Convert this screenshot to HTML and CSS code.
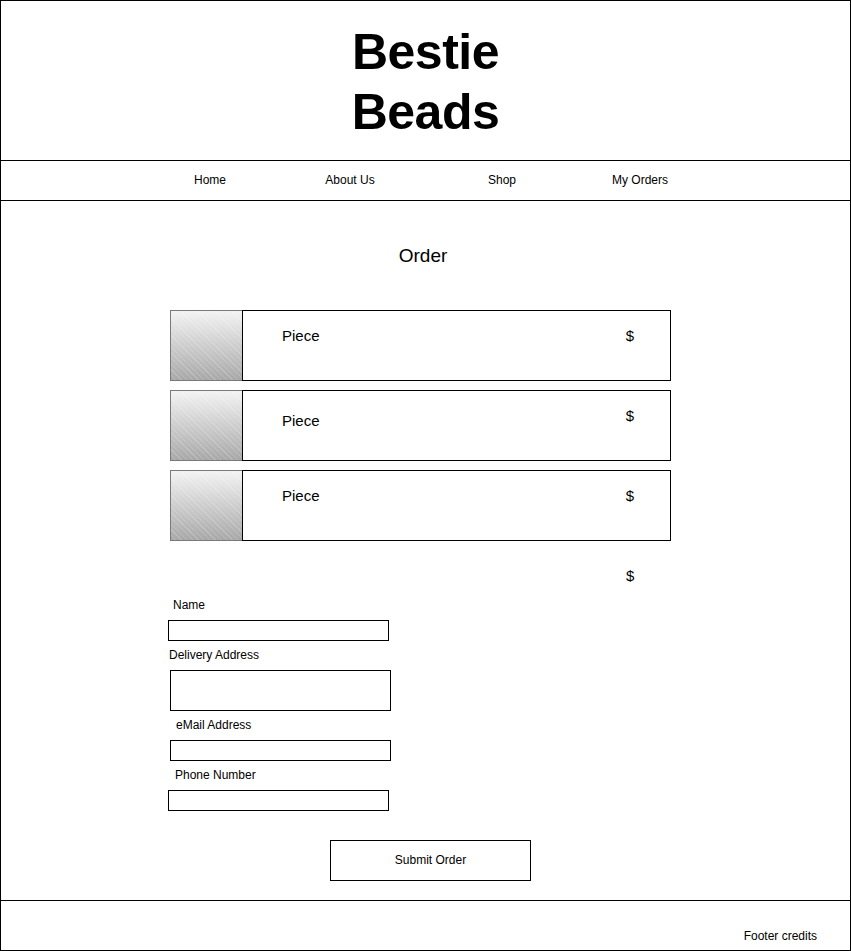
FILE: index.html
```html
<!DOCTYPE html>
<html>
<head>
<meta charset="utf-8">
<title>Bestie Beads</title>
<link rel="stylesheet" href="styles.css">
</head>
<body>
<div class="page">
  <header class="header">
    <h1 class="title">Bestie<br>Beads</h1>
  </header>
  <nav class="nav">
    <a class="nav-item nav-home">Home</a>
    <a class="nav-item nav-about">About Us</a>
    <a class="nav-item nav-shop">Shop</a>
    <a class="nav-item nav-orders">My Orders</a>
  </nav>
  <main class="main">
    <h2 class="order-title">Order</h2>
    <div class="cards">
      <div class="card">
        <div class="thumb"></div>
        <div class="card-body">
          <span class="piece">Piece</span>
          <span class="price">$</span>
        </div>
      </div>
      <div class="card">
        <div class="thumb"></div>
        <div class="card-body">
          <span class="piece piece-low">Piece</span>
          <span class="price">$</span>
        </div>
      </div>
      <div class="card">
        <div class="thumb"></div>
        <div class="card-body">
          <span class="piece">Piece</span>
          <span class="price">$</span>
        </div>
      </div>
    </div>
    <div class="total">$</div>
    <form class="form">
      <label class="label label-name">Name</label>
      <div class="field field-name"></div>
      <label class="label label-address">Delivery Address</label>
      <div class="field field-address"></div>
      <label class="label label-email">eMail Address</label>
      <div class="field field-email"></div>
      <label class="label label-phone">Phone Number</label>
      <div class="field field-phone"></div>
      <div class="submit">Submit Order</div>
    </form>
  </main>
  <footer class="footer">
    <span class="credits">Footer credits</span>
  </footer>
</div>
</body>
</html>
```

FILE: styles.css
```css
* { box-sizing: border-box; }
html, body { margin: 0; padding: 0; background: #fff; }
body { font-family: "Liberation Sans", Arial, sans-serif; color: #000; }

.page {
  width: 851px;
  height: 951px;
  border: 1px solid #000;
  display: flex;
  flex-direction: column;
}

.header {
  height: 160px;
  border-bottom: 1px solid #000;
  padding-top: 21px;
}
.title {
  margin: 0;
  text-align: center;
  font-size: 50px;
  line-height: 60px;
  font-weight: bold;
  letter-spacing: -0.5px;
}

.nav {
  height: 40px;
  border-bottom: 1px solid #000;
  display: flex;
  align-items: center;
  padding: 0 0 2px 149px;
  font-size: 12px;
}
.nav-item { text-align: center; color: #000; }
.nav-home { width: 120px; }
.nav-about { width: 160px; }
.nav-shop { width: 144px; }
.nav-orders { width: 132px; }

.main {
  height: 700px;
  border-bottom: 1px solid #000;
  padding-top: 44px;
}
.order-title {
  margin: 0;
  text-align: center;
  font-size: 19px;
  line-height: 22px;
  font-weight: normal;
  padding-right: 5px;
}

.cards {
  margin: 43px 0 0 169px;
  display: flex;
  flex-direction: column;
  gap: 9px;
  width: 501px;
}
.card {
  display: flex;
  height: 71px;
}
.thumb {
  width: 72px;
  height: 71px;
  border: 1px solid #7a7a7a;
  border-right: none;
  background:
    repeating-linear-gradient(45deg, rgba(255,255,255,0) 0 3px, rgba(255,255,255,0.18) 3px 4px),
    linear-gradient(#f3f3f3, #a8a8a8);
}
.card-body {
  flex: 1;
  border: 1px solid #000;
  display: flex;
  align-items: flex-start;
  padding: 16px 36px 0 39px;
  font-size: 15px;
  line-height: 18px;
}
.piece { flex: 1; }
.piece-low { margin-top: 5px; }

.total {
  margin: 26px 0 0 625px;
  font-size: 15px;
  line-height: 18px;
}

.form {
  margin: 13px 0 0 167px;
  display: flex;
  flex-direction: column;
  align-items: flex-start;
}
.label {
  font-size: 12px;
  line-height: 14px;
  display: block;
}
.label-name { margin-left: 5px; }
.label-address { margin: 7px 0 0 1px; }
.label-email { margin: 7px 0 0 8px; }
.label-phone { margin: 7px 0 0 7px; }

.field {
  border: 1px solid #000;
  width: 221px;
  height: 21px;
  margin-top: 8px;
}
.field-address { margin-left: 2px; height: 41px; }
.field-email { margin-left: 2px; }

.submit {
  margin: 29px 0 0 162px;
  width: 201px;
  height: 41px;
  border: 1px solid #000;
  display: flex;
  align-items: center;
  justify-content: center;
  padding-bottom: 2px;
  font-size: 12px;
}

.footer {
  flex: 1;
  display: flex;
  justify-content: flex-end;
  padding: 28px 33px 0 0;
  font-size: 12px;
  line-height: 14px;
}
```
